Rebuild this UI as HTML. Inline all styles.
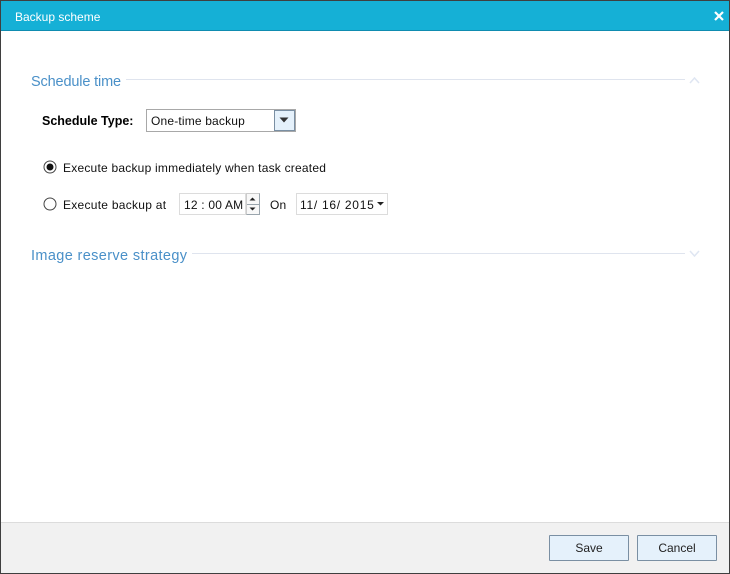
<!DOCTYPE html>
<html>
<head>
<meta charset="utf-8">
<style>
html,body{margin:0;padding:0;background:#fff}
body{width:730px;height:574px;position:relative;overflow:hidden;font-family:"Liberation Sans",sans-serif;font-size:12px;color:#111}
.a{position:absolute;white-space:nowrap}
.t{line-height:16px;height:16px}
.sec{font-size:14.5px;color:#4a90c8;line-height:20px;height:20px}
.line{height:1px;background:#dfe4ee}
.box{box-sizing:border-box;background:#fff}
.btn{box-sizing:border-box;background:#e5f1fb;border:1px solid #7a8fa3;text-align:center;line-height:24px;color:#222;border-radius:1px}
</style>
</head>
<body>
<div class="a" style="left:0;top:0;width:730px;height:574px;box-sizing:border-box;border:1px solid #3f3f3f"></div>
<div class="a" style="left:1px;top:1px;width:728px;height:29px;background:#15b0d6"></div>
<div class="a" style="left:1px;top:30px;width:728px;height:1px;background:#0f8cb0"></div>
<div class="a t" style="left:15px;top:9px;color:#fff">Backup scheme</div>
<svg class="a" style="left:713px;top:10px" width="12" height="12" viewBox="0 0 12 12"><path d="M2 2L10 10M10 2L2 10" stroke="#fff" stroke-width="2.2" fill="none"/></svg>

<div class="a sec" style="left:31px;top:72px;letter-spacing:-.15px">Schedule time</div>
<div class="a line" style="left:126px;top:79px;width:559px"></div>
<svg class="a" style="left:689px;top:76px" width="11" height="8" viewBox="0 0 11 8"><path d="M1 7L5.5 2L10 7" stroke="#dfe6f2" stroke-width="1.5" fill="none"/></svg>

<div class="a t" style="left:42px;top:113px;font-weight:bold;color:#000;font-size:12.5px">Schedule Type:</div>
<div class="a box" style="left:146px;top:109px;width:150px;height:23px;border:1px solid #a8a8a8"></div>
<div class="a t" style="left:151px;top:113px;letter-spacing:.17px">One-time backup</div>
<div class="a box" style="left:274px;top:110px;width:21px;height:21px;background:#e5f1fb;border:1px solid #7a8fa3"></div>
<svg class="a" style="left:279px;top:117px" width="11" height="7"><path d="M0.5 0.5H9.5L5 5.5Z" fill="#333"/></svg>

<svg class="a" style="left:43px;top:160px" width="14" height="14" viewBox="0 0 14 14"><circle cx="7" cy="7" r="6" fill="#fff" stroke="#444" stroke-width="1"/><circle cx="7" cy="7" r="3.5" fill="#111"/></svg>
<div class="a t" style="left:63px;top:160px;letter-spacing:.22px">Execute backup immediately when task created</div>

<svg class="a" style="left:43px;top:197px" width="14" height="14" viewBox="0 0 14 14"><circle cx="7" cy="7" r="6" fill="#fff" stroke="#444" stroke-width="1"/></svg>
<div class="a t" style="left:63px;top:197px;letter-spacing:.27px">Execute backup at</div>

<div class="a box" style="left:179px;top:193px;width:67px;height:22px;border:1px solid #dcdcdc"></div>
<div class="a t" style="left:184px;top:197px;letter-spacing:.2px">12 : 00 AM</div>
<div class="a box" style="left:246px;top:193px;width:14px;height:22px;border:1px solid #9aa5ad;border-top-color:#ccc;border-left-color:#ccc;background:#f8f8f8"></div>
<div class="a" style="left:247px;top:204px;width:12px;height:1px;background:#9aa5ad"></div>
<svg class="a" style="left:249px;top:197px" width="7" height="4"><path d="M0.5 3.5H6.5L3.5 0.5Z" fill="#222"/></svg>
<svg class="a" style="left:249px;top:207px" width="7" height="4"><path d="M0.5 0.5H6.5L3.5 3.5Z" fill="#222"/></svg>

<div class="a t" style="left:270px;top:197px;letter-spacing:.2px">On</div>
<div class="a box" style="left:296px;top:193px;width:92px;height:22px;border:1px solid #dcdcdc"></div>
<div class="a t" style="left:300px;top:197px;letter-spacing:.72px">11/ 16/ 2015</div>
<svg class="a" style="left:377px;top:202px" width="7" height="4"><path d="M0 0H7L3.5 3.5Z" fill="#222"/></svg>

<div class="a sec" style="left:31px;top:246px;letter-spacing:.37px">Image reserve strategy</div>
<div class="a line" style="left:192px;top:253px;width:493px"></div>
<svg class="a" style="left:689px;top:250px" width="11" height="8" viewBox="0 0 11 8"><path d="M1 1L5.5 6L10 1" stroke="#dfe6f2" stroke-width="1.5" fill="none"/></svg>

<div class="a" style="left:1px;top:522px;width:728px;height:51px;background:#f1f1f1;border-top:1px solid #dcdcdc;box-sizing:border-box"></div>
<div class="a btn" style="left:549px;top:535px;width:80px;height:26px">Save</div>
<div class="a btn" style="left:637px;top:535px;width:80px;height:26px">Cancel</div>
</body>
</html>
